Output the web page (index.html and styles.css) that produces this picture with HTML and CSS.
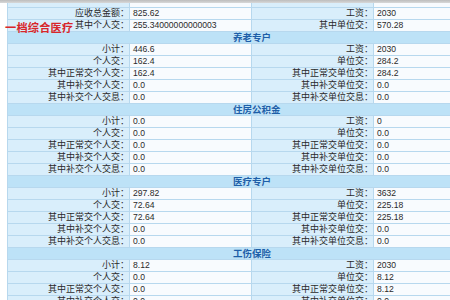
FILE: index.html
```html
<!DOCTYPE html>
<html lang="zh-CN">
<head>
<meta charset="utf-8">
<title>缴费明细</title>
<link rel="stylesheet" href="styles.css">
</head>
<body>
<div class="topbar"></div>
<div class="wrap">
<table class="grid">
<colgroup><col class="c1"><col class="c2"><col class="c3"><col class="c4"></colgroup>
<tr class="cut"><td class="k"></td><td class="v"></td><td class="k"></td><td class="v"></td></tr>
<tr><td class="k">应收总金额：</td><td class="v">825.62</td><td class="k">工资：</td><td class="v">2030</td></tr>
<tr><td class="k">其中个人交：</td><td class="v">255.34000000000003</td><td class="k">其中单位交：</td><td class="v">570.28</td></tr>
<tr><td class="sec" colspan="4">养老专户</td></tr>
<tr><td class="k">小计：</td><td class="v">446.6</td><td class="k">工资：</td><td class="v">2030</td></tr>
<tr><td class="k">个人交：</td><td class="v">162.4</td><td class="k">单位交：</td><td class="v">284.2</td></tr>
<tr><td class="k">其中正常交个人交：</td><td class="v">162.4</td><td class="k">其中正常交单位交：</td><td class="v">284.2</td></tr>
<tr><td class="k">其中补交个人交：</td><td class="v">0.0</td><td class="k">其中补交单位交：</td><td class="v">0.0</td></tr>
<tr><td class="k">其中补交个人交息：</td><td class="v">0.0</td><td class="k">其中补交单位交息：</td><td class="v">0.0</td></tr>
<tr><td class="sec" colspan="4">住房公积金</td></tr>
<tr><td class="k">小计：</td><td class="v">0.0</td><td class="k">工资：</td><td class="v">0</td></tr>
<tr><td class="k">个人交：</td><td class="v">0.0</td><td class="k">单位交：</td><td class="v">0.0</td></tr>
<tr><td class="k">其中正常交个人交：</td><td class="v">0.0</td><td class="k">其中正常交单位交：</td><td class="v">0.0</td></tr>
<tr><td class="k">其中补交个人交：</td><td class="v">0.0</td><td class="k">其中补交单位交：</td><td class="v">0.0</td></tr>
<tr><td class="k">其中补交个人交息：</td><td class="v">0.0</td><td class="k">其中补交单位交息：</td><td class="v">0.0</td></tr>
<tr><td class="sec" colspan="4">医疗专户</td></tr>
<tr><td class="k">小计：</td><td class="v">297.82</td><td class="k">工资：</td><td class="v">3632</td></tr>
<tr><td class="k">个人交：</td><td class="v">72.64</td><td class="k">单位交：</td><td class="v">225.18</td></tr>
<tr><td class="k">其中正常交个人交：</td><td class="v">72.64</td><td class="k">其中正常交单位交：</td><td class="v">225.18</td></tr>
<tr><td class="k">其中补交个人交：</td><td class="v">0.0</td><td class="k">其中补交单位交：</td><td class="v">0.0</td></tr>
<tr><td class="k">其中补交个人交息：</td><td class="v">0.0</td><td class="k">其中补交单位交息：</td><td class="v">0.0</td></tr>
<tr><td class="sec" colspan="4">工伤保险</td></tr>
<tr><td class="k">小计：</td><td class="v">8.12</td><td class="k">工资：</td><td class="v">2030</td></tr>
<tr><td class="k">个人交：</td><td class="v">0.0</td><td class="k">单位交：</td><td class="v">8.12</td></tr>
<tr><td class="k">其中正常交个人交：</td><td class="v">0.0</td><td class="k">其中正常交单位交：</td><td class="v">8.12</td></tr>
<tr><td class="k">其中补交个人交：</td><td class="v">0.0</td><td class="k">其中补交单位交：</td><td class="v">0.0</td></tr>
</table>
<div class="note">一档综合医疗</div>
</div>
</body>
</html>
```

FILE: styles.css
```css
html, body {
  margin: 0;
  padding: 0;
  background: #ffffff;
  overflow: hidden;
  width: 450px;
  height: 300px;
}
body {
  font-family: "Liberation Sans", "Noto Sans CJK SC", sans-serif;
  color: #2a2a2a;
}
.topbar {
  height: 3px;
  background: linear-gradient(#bdbdbd, #d8d8d8);
}
.wrap {
  position: relative;
  padding-left: 7px;
}
.grid {
  border-collapse: collapse;
  table-layout: fixed;
  width: 488px;
}
.c1, .c2, .c3, .c4 { width: 122px; }
.grid td {
  height: 11px;
  padding: 0;
  border: 1px solid #b7d8ee;
  font-size: 9px;
  line-height: 11px;
  white-space: nowrap;
  overflow: hidden;
}
.grid tr.cut td { height: 4px; line-height: 4px; border-top: none; }
.k {
  background: #d9eefb;
  text-align: right;
  padding-right: 1px;
}
.v {
  background: #f8fbfe;
  text-align: left;
  padding-left: 3px !important;
  font-size: 8.6px !important;
}
.grid td.sec {
  background: #bde2f7;
  color: #1d5ea8;
  font-weight: bold;
  font-size: 9.5px;
  padding-left: 225px;
  text-align: left;
}
.note {
  position: absolute;
  left: 5px;
  top: 18px;
  font-size: 11.2px;
  line-height: 13px;
  font-weight: bold;
  color: #d8262a;
  font-family: "Noto Sans CJK SC", sans-serif;
  letter-spacing: 0.2px;
}
```
